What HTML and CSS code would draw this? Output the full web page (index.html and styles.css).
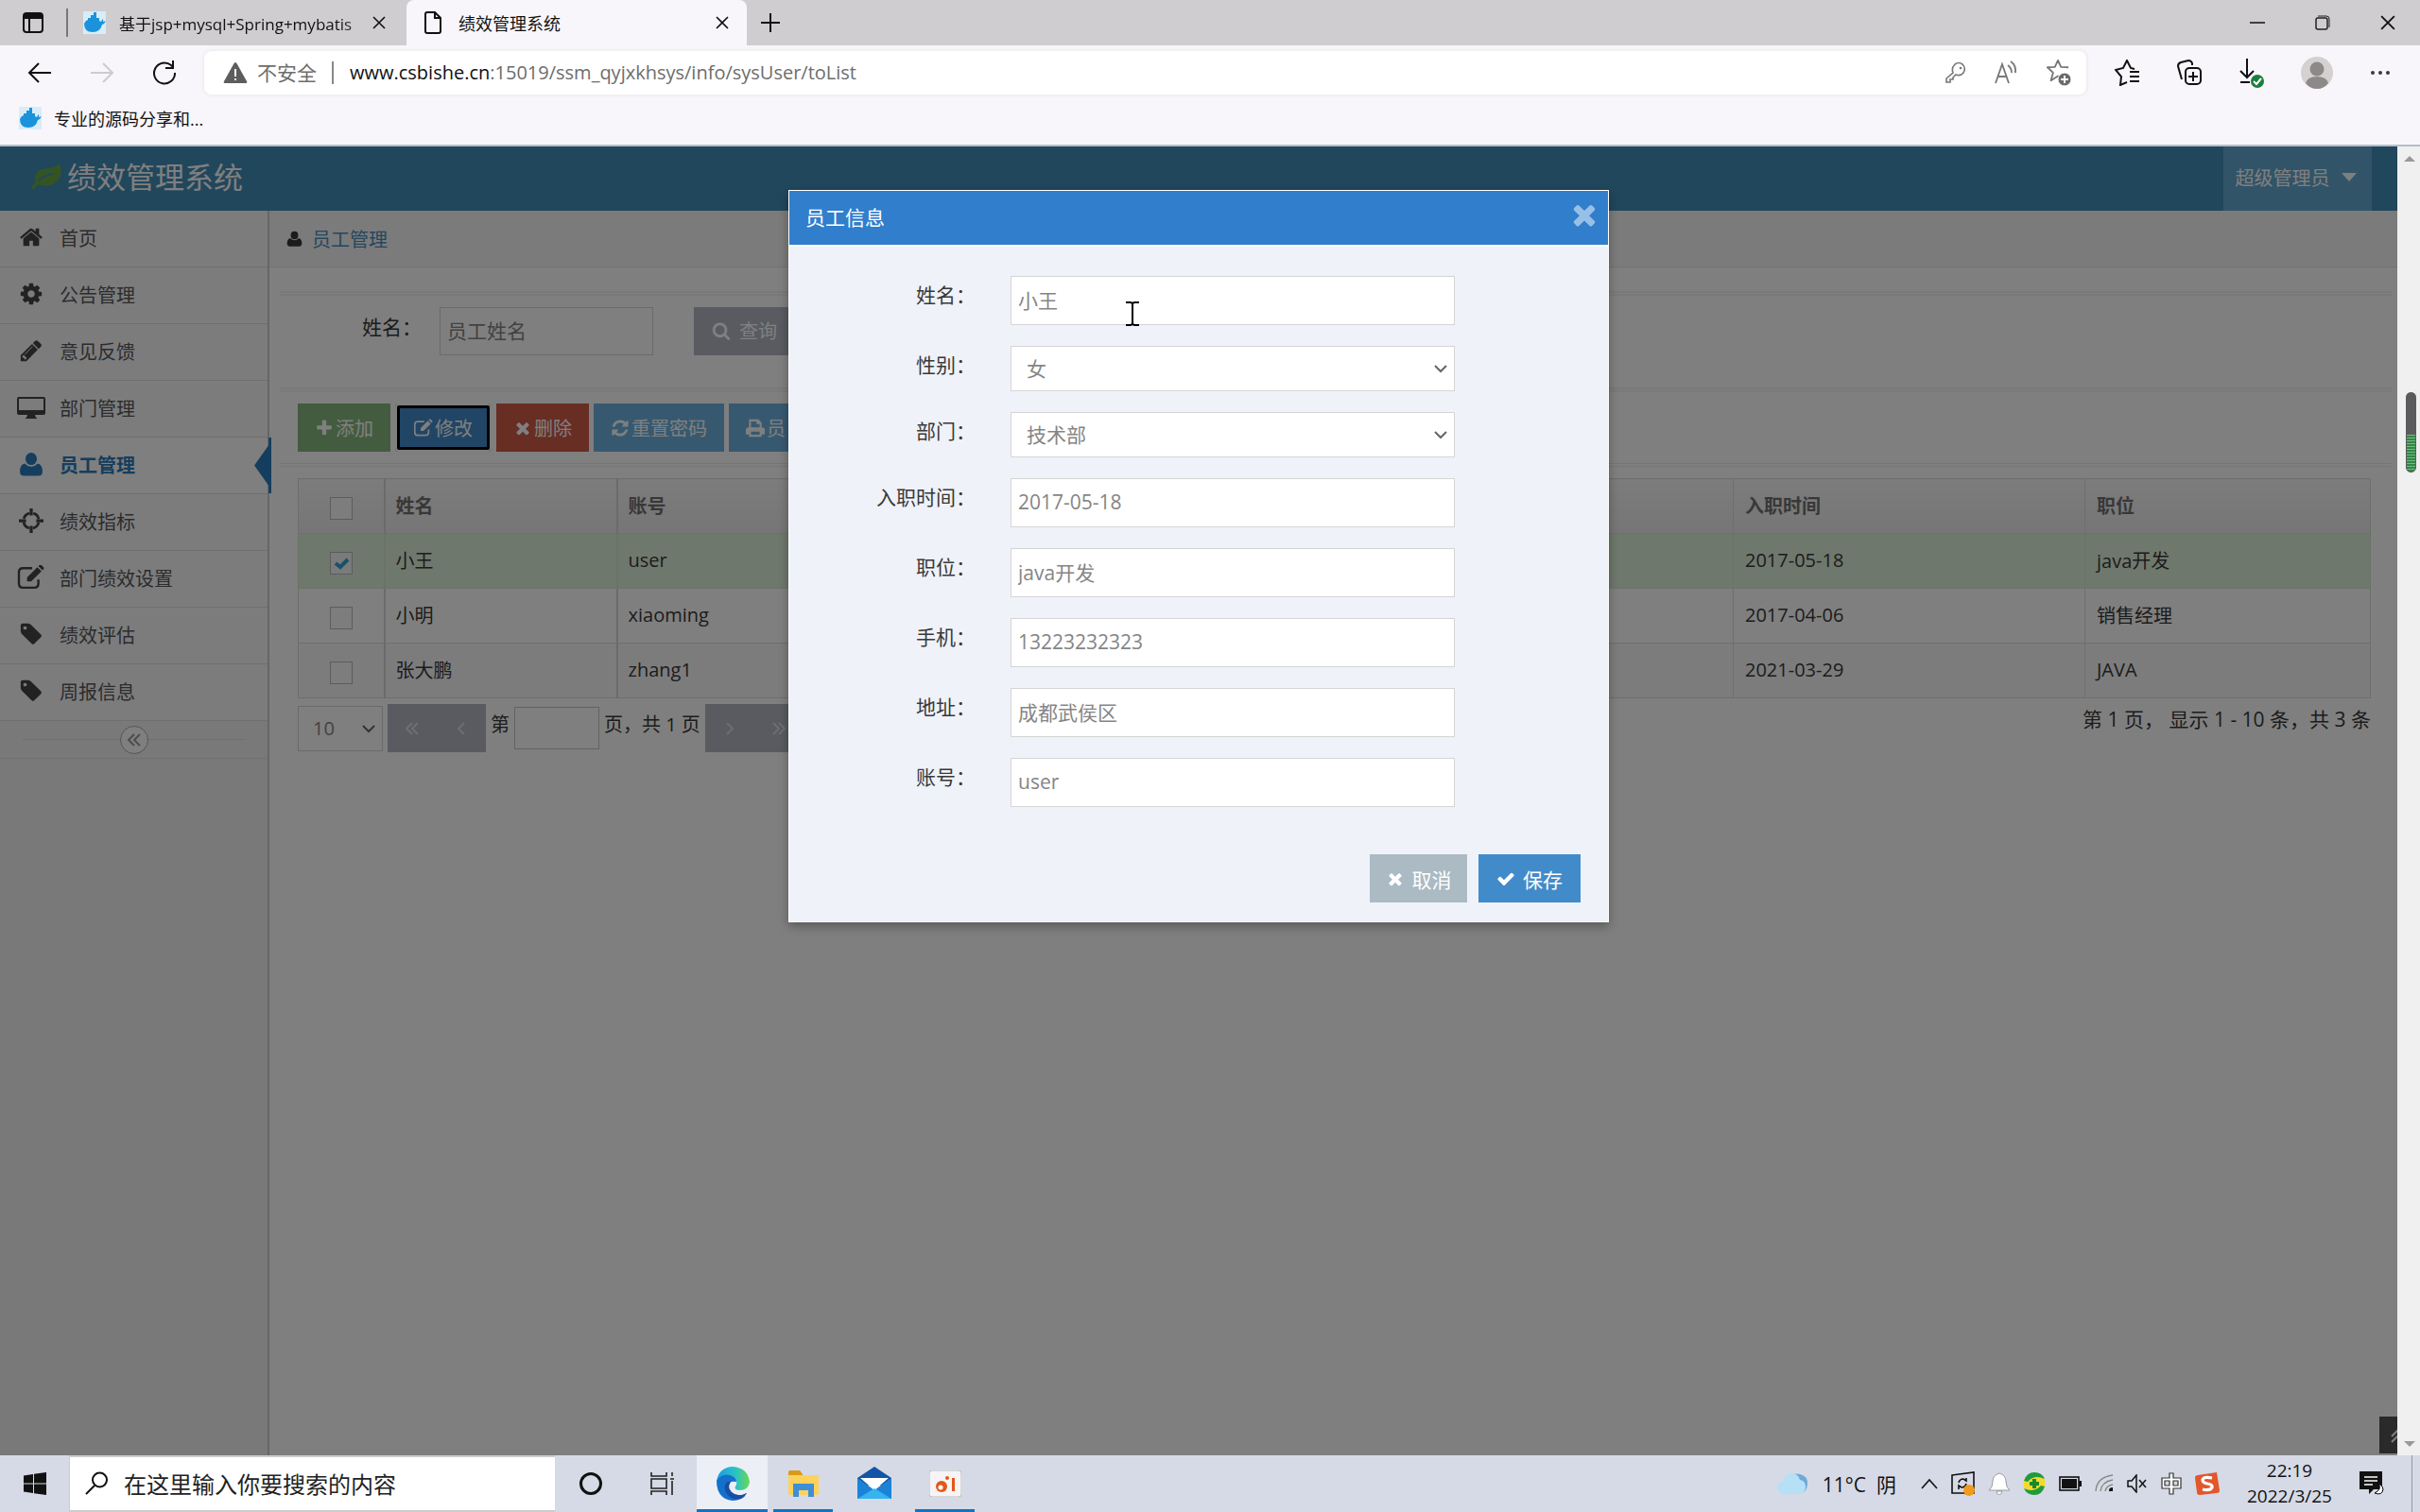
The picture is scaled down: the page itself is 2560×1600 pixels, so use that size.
FILE: index.html
```html
<!DOCTYPE html>
<html lang="zh-CN">
<head>
<meta charset="utf-8">
<title>绩效管理系统</title>
<link rel="stylesheet" href="styles.css">
</head>
<body>
<svg class="defs" aria-hidden="true">
  <symbol id="i-check" viewBox="0 0 1792 1792"><path d="M1671 566q0 40-28 68l-724 724-136 136q-28 28-68 28t-68-28l-136-136-362-362q-28-28-28-68t28-68l136-136q28-28 68-28t68 28l294 295 656-657q28-28 68-28t68 28l136 136q28 28 28 68z"/></symbol>
  <symbol id="i-times" viewBox="0 0 1792 1792"><path d="M1490 1322q0 40-28 68l-136 136q-28 28-68 28t-68-28l-294-294-294 294q-28 28-68 28t-68-28l-136-136q-28-28-28-68t28-68l294-294-294-294q-28-28-28-68t28-68l136-136q28-28 68-28t68 28l294 294 294-294q28-28 68-28t68 28l136 136q28 28 28 68t-28 68l-294 294 294 294q28 28 28 68z"/></symbol>
  <symbol id="i-plus" viewBox="0 0 1792 1792"><path d="M1600 736v192q0 40-28 68t-68 28h-416v416q0 40-28 68t-68 28h-192q-40 0-68-28t-28-68v-416h-416q-40 0-68-28t-28-68v-192q0-40 28-68t68-28h416v-416q0-40 28-68t68-28h192q40 0 68 28t28 68v416h416q40 0 68 28t28 68z"/></symbol>
  <symbol id="i-home" viewBox="0 0 1792 1792"><path d="M1472 992v480q0 26-19 45t-45 19h-384v-384h-256v384h-384q-26 0-45-19t-19-45v-480q0-1 .5-3t.5-3l575-474 575 474q1 2 1 6zm223-69l-62 74q-8 9-21 11h-3q-13 0-21-7l-692-577-692 577q-12 8-24 7-13-2-21-11l-62-74q-8-10-7-23.5t11-21.5l719-599q32-26 76-26t76 26l244 204v-195q0-14 9-23t23-9h192q14 0 23 9t9 23v408l219 182q10 8 11 21.5t-7 23.5z"/></symbol>
  <symbol id="i-cog" viewBox="0 0 1792 1792"><path d="M1152 896q0-106-75-181t-181-75-181 75-75 181 75 181 181 75 181-75 75-181zm512-109v222q0 12-8 23t-20 13l-185 28q-19 54-39 91 35 50 107 138 10 12 10 25t-9 23q-27 37-99 108t-94 71q-12 0-26-9l-138-108q-44 23-91 38-16 136-29 186-7 28-36 28h-222q-14 0-24.5-8.5t-11.5-21.5l-28-184q-49-16-90-37l-141 107q-10 9-25 9-14 0-25-11-126-114-165-168-7-10-7-23 0-12 8-23 15-21 51-66.5t54-70.5q-27-50-41-99l-183-27q-13-2-21-12.5t-8-23.5v-222q0-12 8-23t19-13l186-28q14-46 39-92-40-57-107-138-10-12-10-24 0-10 9-23 26-36 98.5-107.5t94.5-71.5q13 0 26 10l138 107q44-23 91-38 16-136 29-186 7-28 36-28h222q14 0 24.5 8.5t11.5 21.5l28 184q49 16 90 37l142-107q9-9 24-9 13 0 25 10 129 119 165 170 7 8 7 22 0 12-8 23-15 21-51 66.5t-54 70.5q26 50 41 98l183 28q13 2 21 12.5t8 23.5z"/></symbol>
  <symbol id="i-pencil" viewBox="0 0 1792 1792"><path d="M491 1536l91-91-235-235-91 91v107h128v128h107zm523-928q0-22-22-22-10 0-17 7l-542 542q-7 7-7 17 0 22 22 22 10 0 17-7l542-542q7-7 7-17zm-54-192l416 416-832 832h-416v-416zm683 96q0 53-37 90l-166 166-416-416 166-165q36-38 90-38 53 0 91 38l235 234q37 39 37 91z"/></symbol>
  <symbol id="i-tag" viewBox="0 0 1792 1792"><path d="M576 448q0-53-37.5-90.5t-90.5-37.5-90.5 37.5-37.5 90.5 37.5 90.5 90.5 37.5 90.5-37.5 37.5-90.5zm1067 576q0 53-37 90l-491 492q-39 37-91 37-53 0-90-37l-715-716q-38-37-64.5-101t-26.5-117v-416q0-52 38-90t90-38h416q53 0 117 26.5t102 64.5l715 714q37 39 37 91z"/></symbol>
  <symbol id="i-search" viewBox="0 0 1792 1792"><path d="M1216 832q0-185-131.5-316.5t-316.5-131.5-316.5 131.5-131.5 316.5 131.5 316.5 316.5 131.5 316.5-131.5 131.5-316.5zm512 832q0 52-38 90t-90 38q-54 0-90-38l-343-342q-179 124-399 124-143 0-273.5-55.5t-225-150-150-225-55.5-273.5 55.5-273.5 150-225 225-150 273.5-55.5 273.5 55.5 225 150 150 225 55.5 273.5q0 220-124 399l343 343q37 37 37 90z"/></symbol>
  <symbol id="i-refresh" viewBox="0 0 1792 1792"><path d="M1639 1056q0 5-1 7-64 268-268 434.5t-478 166.5q-146 0-282.5-55t-243.5-157l-129 129q-19 19-45 19t-45-19-19-45v-448q0-26 19-45t45-19h448q26 0 45 19t19 45-19 45l-137 137q71 66 161 102t187 36q134 0 250-65t186-179q11-17 53-117 8-23 30-23h192q13 0 22.5 9.5t9.5 22.5zm25-800v448q0 26-19 45t-45 19h-448q-26 0-45-19t-19-45 19-45l138-138q-148-137-349-137-134 0-250 65t-186 179q-11 17-53 117-8 23-30 23h-199q-13 0-22.5-9.5t-9.5-22.5v-7q65-268 270-434.5t480-166.5q146 0 284 55.5t245 156.5l130-129q19-19 45-19t45 19 19 45z"/></symbol>
  <symbol id="i-user" viewBox="0 0 24 24"><ellipse cx="12" cy="7" rx="5.6" ry="6"/><path d="M6 11.500q2.500 3 6 3t6-3q5 .5 5 8 0 4-4 4h-14q-4 0-4-4 0-7.500 5-8z"/></symbol>
  <symbol id="i-desktop" viewBox="0 0 30 24"><path fill-rule="evenodd" d="M2 1h26q2 0 2 2v15q0 2-2 2h-9l1 3h1v1h-12v-1h1l1-3h-9q-2 0-2-2v-15q0-2 2-2zM2 3v12h26v-12z"/></symbol>
  <symbol id="i-cross" viewBox="0 0 24 24"><circle cx="12" cy="12" r="7.500" fill="none" stroke="currentColor" stroke-width="2.600" stroke-dasharray="8 3.780" stroke-dashoffset="-1.900"/><path d="M10.500 0h3v7h-3zM10.500 17h3v7h-3zM0 10.500h7v3h-7zM17 10.500h7v3h-7z"/></symbol>
  <symbol id="i-edit" viewBox="0 0 26 24"><path d="M20 14v4q0 4-4 4h-11q-4 0-4-4v-11q0-4 4-4h9" fill="none" stroke="currentColor" stroke-width="2.200"/><path d="M9 12l10-10 4 4-10 10h-4zM20 1l1-1q1-1 2 0l2 2q1 1 0 2l-1 1z"/></symbol>
  <symbol id="i-print" viewBox="0 0 24 24"><path fill-rule="evenodd" d="M4 1h12l4 4v6q4 0 4 3v6h-4v3h-16v-3h-4v-6q0-3 4-3zM6.500 3.500v7.500h11v-4h-4v-3.500zM6.500 16.500v4h11v-4z"/></symbol>
  <symbol id="i-whale" viewBox="0 0 24 24"><rect width="24" height="24" fill="#d8edf8"/><path fill="#1b93dc" d="M1 13l2-3 2-1V7h3V4h3V1h3v6h3v3l2 1q1-1 1-3 2 1 1 3 1 0 3-1-1 3-4 4-2 8-10 8Q1 22 1 13z"/></symbol>
  <symbol id="i-x" viewBox="0 0 14 14"><path d="M1 1l12 12M13 1L1 13" fill="none" stroke="currentColor" stroke-width="1.600"/></symbol>
  <symbol id="i-dleft" viewBox="0 0 16 16"><path d="M8 2L2 8l6 6M14 2L8 8l6 6" fill="none" stroke="currentColor" stroke-width="2"/></symbol>
  <symbol id="i-left" viewBox="0 0 16 16"><path d="M11 2L5 8l6 6" fill="none" stroke="currentColor" stroke-width="2"/></symbol>
  <symbol id="i-right" viewBox="0 0 16 16"><path d="M5 2l6 6-6 6" fill="none" stroke="currentColor" stroke-width="2"/></symbol>
  <symbol id="i-dright" viewBox="0 0 16 16"><path d="M2 2l6 6-6 6M8 2l6 6-6 6" fill="none" stroke="currentColor" stroke-width="2"/></symbol>
  <symbol id="i-star" viewBox="0 0 28 28"><path d="M19 24l-5-4-8 5 2.500-9L2 10l8.500-.5L14 2l3.500 7.500L26 10" fill="none" stroke="currentColor" stroke-width="2" stroke-linejoin="round"/></symbol>
</svg>

<header class="tabstrip">
  <button class="tabmenu" aria-label="标签操作"><svg width="22" height="22" viewBox="0 0 22 22"><rect x="1" y="1" width="20" height="20" rx="3" fill="none" stroke="#111" stroke-width="2"/><path d="M1 1h20v6h-20zM6 6h2v14h-2z"/></svg></button>
  <div class="tab">
    <svg width="24" height="24"><use href="#i-whale"/></svg>
    <span class="tab-title fade">基于jsp+mysql+Spring+mybatis</span>
    <button aria-label="关闭"><svg width="14" height="14"><use href="#i-x"/></svg></button>
  </div>
  <div class="tab active">
    <svg width="20" height="24" viewBox="0 0 20 24"><path d="M2 3q0-2 2-2h8l6 6v14q0 2-2 2h-12q-2 0-2-2zM12 1v6h6" fill="none" stroke="#111" stroke-width="2"/></svg>
    <span class="tab-title">绩效管理系统</span>
    <button aria-label="关闭"><svg width="14" height="14"><use href="#i-x"/></svg></button>
  </div>
  <button class="newtab" aria-label="新建标签"><svg width="22" height="22" viewBox="0 0 22 22"><path d="M11 1v20M1 11h20" stroke="#111" stroke-width="2"/></svg></button>
  <div class="winbtns">
    <button aria-label="最小化"><svg width="16" height="16" viewBox="0 0 16 16"><path d="M0 8h16" stroke="#111" stroke-width="1.500"/></svg></button>
    <button aria-label="还原"><svg width="16" height="16" viewBox="0 0 16 16"><path d="M3 1h9q3 0 3 3v9" fill="none" stroke="#222"/><rect x="1" y="3" width="12" height="12" rx="2" fill="none" stroke="#222" stroke-width="1.500"/></svg></button>
    <button aria-label="关闭窗口"><svg width="16" height="16"><use href="#i-x"/></svg></button>
  </div>
</header>

<nav class="toolbar">
  <div class="navbtns">
    <button aria-label="后退"><svg width="26" height="24" viewBox="0 0 26 24"><path d="M12 2L2 12l10 10M2 12h23" fill="none" stroke="#111" stroke-width="2"/></svg></button>
    <button aria-label="前进"><svg width="26" height="24" viewBox="0 0 26 24"><path d="M14 2l10 10-10 10M24 12H1" fill="none" stroke="#ccc" stroke-width="2"/></svg></button>
    <button aria-label="刷新"><svg width="26" height="26" viewBox="0 0 26 26"><path d="M24 13A11 11 0 1 1 20 5l2 2M22 0v8h-8" fill="none" stroke="#111" stroke-width="2"/></svg></button>
  </div>
  <div class="address">
    <svg width="26" height="24" viewBox="0 0 26 24"><path d="M13 1q1 0 2 2l10 18q1 2-1 2h-22q-2 0-1-2L11 3q1-2 2-2z" fill="#5d5d5d"/><path d="M12 8h2v8h-2zM12 18h2v2h-2z" fill="#fff"/></svg>
    <span class="insecure">不安全</span>
    <div class="url" role="textbox" aria-label="地址栏"><span>www.csbishe.cn</span>:15019/ssm_qyjxkhsys/info/sysUser/toList</div>
    <div class="addr-icons">
      <svg width="22" height="24" viewBox="0 0 22 24"><path d="M8 12q-2-5 2-9 4-3 8 0 4 4 1 9-3 4-8 2l-3 3v2h-3v3H1v-4z" fill="none" stroke="#777" stroke-width="1.600"/><circle cx="16" cy="7" r="1.300" fill="#777"/></svg>
      <svg width="24" height="26" viewBox="0 0 24 26"><path d="M1 24L8 4l7 20M4 17h8M14 5q4 3 4 8M17 1q6 4 5 12" fill="none" stroke="#777" stroke-width="1.800"/></svg>
      <svg width="28" height="30" viewBox="0 0 28 30"><g color="#777"><use href="#i-star" width="26" height="26"/></g><circle cx="20" cy="22" r="7" fill="#6a6a6a" stroke="#fff"/><path d="M20 18v8M16 22h8" stroke="#fff" stroke-width="2"/></svg>
    </div>
  </div>
  <div class="tools">
    <svg width="26" height="28" viewBox="0 0 26 28"><path d="M13 24l-7 3 1-9-6-7 8-2 4-8 4 8 4 1M16 13h10M16 18h10M16 23h10" fill="none" stroke="#111" stroke-width="2"/></svg>
    <svg width="26" height="28" viewBox="0 0 26 28"><path d="M5 21L1 7q0-3 3-4l8-2q3 0 4 3v2" fill="none" stroke="#111" stroke-width="2"/><rect x="9" y="9" width="16" height="17" rx="4" fill="none" stroke="#111" stroke-width="2"/><path d="M17 13v10M12 18h10" stroke="#111" stroke-width="2"/></svg>
    <svg width="26" height="34" viewBox="0 0 26 34"><path d="M8 2v20M1 15l7 7 7-7M1 27h10" fill="none" stroke="#111" stroke-width="2"/><circle cx="19" cy="26" r="7" fill="#1a7f3c"/><path d="M15 26l3 3 5-6" fill="none" stroke="#fff" stroke-width="2"/></svg>
    <svg width="34" height="34" viewBox="0 0 34 34"><circle cx="17" cy="17" r="17" fill="#d4d1d0"/><circle cx="17" cy="13" r="7.500" fill="#8d8988"/><path d="M5 28q2-7 12-7t12 7q-5 6-12 6t-12-6z" fill="#8d8988"/></svg>
    <svg width="20" height="6" viewBox="0 0 20 6"><circle cx="2" cy="3" r="2"/><circle cx="10" cy="3" r="2"/><circle cx="18" cy="3" r="2"/></svg>
  </div>
</nav>
<div class="bookmarks">
  <svg width="24" height="24"><use href="#i-whale"/></svg><a href="#">专业的源码分享和...</a>
</div>

<div class="viewport">
  <div class="page">
    <header class="appbar">
      <a class="brand" href="#"><svg width="32" height="28" viewBox="0 0 32 28"><path fill="#69aa46" d="M30 1q4 10-2 18-6 7-15 5-4-1-7 0l-3 4q-3 0-2-3l3-4Q2 10 12 7q13-1 18-6z"/><path d="M8 19q6-6 15-7" fill="none" stroke="#438eb9" stroke-width="2"/></svg><span>绩效管理系统</span></a>
      <button class="userbox">超级管理员<i></i></button>
    </header>
    <div class="columns">
      <nav class="sidebar">
        <a href="#"><svg><use href="#i-home"/></svg>首页</a>
        <a href="#"><svg><use href="#i-cog"/></svg>公告管理</a>
        <a href="#"><svg><use href="#i-pencil"/></svg>意见反馈</a>
        <a href="#"><svg><use href="#i-desktop"/></svg>部门管理</a>
        <a href="#" class="current"><svg><use href="#i-user"/></svg>员工管理</a>
        <a href="#"><svg><use href="#i-cross"/></svg>绩效指标</a>
        <a href="#"><svg><use href="#i-edit"/></svg>部门绩效设置</a>
        <a href="#"><svg><use href="#i-tag"/></svg>绩效评估</a>
        <a href="#"><svg><use href="#i-tag"/></svg>周报信息</a>
        <div class="collapse"><button aria-label="收起"><svg width="16" height="16"><use href="#i-dleft"/></svg></button></div>
      </nav>
      <main class="content">
        <div class="crumbs"><svg width="17" height="17"><use href="#i-user"/></svg><a href="#">员工管理</a></div>
        <form class="search">
          <label for="q">姓名：</label>
          <input id="q" placeholder="员工姓名">
          <button type="button"><svg width="20" height="20"><use href="#i-search"/></svg>查询</button>
        </form>
        <div class="actions">
          <button class="green"><svg><use href="#i-plus"/></svg>添加</button>
          <button class="blue focus"><svg><use href="#i-edit"/></svg>修改</button>
          <button class="red"><svg><use href="#i-times"/></svg>删除</button>
          <button class="sky"><svg><use href="#i-refresh"/></svg>重置密码</button>
          <button class="sky"><svg><use href="#i-print"/></svg>员</button>
        </div>
        <div class="grid">
          <table>
            <colgroup><col class="c-check"><col class="c-name"><col><col class="c-date"><col class="c-post"></colgroup>
            <thead><tr><th class="ck"><input type="checkbox" aria-label="全选"></th><th>姓名</th><th>账号</th><th>入职时间</th><th>职位</th></tr></thead>
            <tbody>
              <tr class="picked"><td class="ck"><input type="checkbox" checked aria-label="小王"></td><td>小王</td><td>user</td><td>2017-05-18</td><td>java开发</td></tr>
              <tr><td class="ck"><input type="checkbox" aria-label="小明"></td><td>小明</td><td>xiaoming</td><td>2017-04-06</td><td>销售经理</td></tr>
              <tr class="odd"><td class="ck"><input type="checkbox" aria-label="张大鹏"></td><td>张大鹏</td><td>zhang1</td><td>2021-03-29</td><td>JAVA</td></tr>
            </tbody>
          </table>
          <div class="pager">
            <select aria-label="每页条数"><option>10</option></select>
            <span class="pg"><button aria-label="首页"><svg><use href="#i-dleft"/></svg></button><button aria-label="上一页"><svg><use href="#i-left"/></svg></button></span>
            <label for="pageno">第</label><input id="pageno"><span>页，共 1 页</span>
            <span class="pg"><button aria-label="下一页"><svg><use href="#i-right"/></svg></button><button aria-label="末页"><svg><use href="#i-dright"/></svg></button></span>
            <span class="total">第 1 页， 显示 1 - 10 条，共 3 条</span>
          </div>
        </div>
      </main>
    </div>
    <button class="totop" aria-label="回到顶部"><svg width="16" height="16" viewBox="0 0 16 16"><path d="M2 9l6-6 6 6M2 15l6-6 6 6" fill="none" stroke="#fff" stroke-width="2"/></svg></button>
    <div class="backdrop">
      <form class="dialog" role="dialog" aria-labelledby="dlg">
        <div class="dialog-head"><h2 id="dlg">员工信息</h2><button type="button" aria-label="关闭"><svg width="34" height="34"><use href="#i-times"/></svg></button></div>
        <div class="fields">
          <div><label for="f1">姓名：</label><input id="f1" value="小王"></div>
          <div><label for="f2">性别：</label><select id="f2"><option>女</option></select></div>
          <div><label for="f3">部门：</label><select id="f3"><option>技术部</option></select></div>
          <div><label for="f4">入职时间：</label><input id="f4" value="2017-05-18"></div>
          <div><label for="f5">职位：</label><input id="f5" value="java开发"></div>
          <div><label for="f6">手机：</label><input id="f6" value="13223232323"></div>
          <div><label for="f7">地址：</label><input id="f7" value="成都武侯区"></div>
          <div><label for="f8">账号：</label><input id="f8" value="user"></div>
        </div>
        <div class="dialog-foot">
          <button type="button" class="cancel"><svg width="20" height="20"><use href="#i-times"/></svg>取消</button>
          <button type="button" class="save"><svg width="20" height="20"><use href="#i-check"/></svg>保存</button>
        </div>
      </form>
    </div>
    <svg class="ibeam" width="14" height="26" viewBox="0 0 14 26"><path d="M0 1h5l2 1 2-1h5M0 25h5l2-1 2 1h5M7 2v22" fill="none" stroke="#000" stroke-width="2"/></svg>
  </div>
  <div class="scroll"><i class="up"></i><span class="meter"></span><i class="down"></i></div>
</div>

<footer class="taskbar">
  <button class="start" aria-label="开始"><svg width="24" height="24" viewBox="0 0 24 24"><path d="M0 3.500L10 2v9.500H0zM11 1.800L24 0v11.500H11zM0 12.500h10V22L0 20.500zM11 12.500h13V24l-13-1.800z"/></svg></button>
  <div class="tsearch">
    <svg width="26" height="26" viewBox="0 0 26 26"><circle cx="15.500" cy="9" r="7.500" fill="none" stroke="#111" stroke-width="2"/><path d="M10 15L1 24" stroke="#111" stroke-width="2"/></svg>
    <input aria-label="搜索" placeholder="在这里输入你要搜索的内容">
  </div>
  <div class="apps">
    <button aria-label="Cortana"><svg width="26" height="26" viewBox="0 0 26 26"><circle cx="13" cy="13" r="10.500" fill="none" stroke="#111" stroke-width="3"/></svg></button>
    <button aria-label="任务视图"><svg width="26" height="24" viewBox="0 0 26 24"><path d="M2 0v4h16V0M2 24v-4h16v4M2 7h16v10H2zM24 0v4M24 9v15M22 7h4" fill="none" stroke="#222" stroke-width="1.600"/></svg></button>
    <button aria-label="Edge" class="on lit"><svg width="36" height="36" viewBox="0 0 36 36"><defs><linearGradient id="eg" x1="0" x2="1"><stop offset="0" stop-color="#1c9ce4"/><stop offset=".6" stop-color="#2cc4c4"/><stop offset="1" stop-color="#6bd84e"/></linearGradient></defs><path fill="url(#eg)" d="M1 16Q3 1 18 0q16 1 18 16-1 9-11 9-6-1-4-4 3-5-1-9Q12 7 1 16z"/><path fill="#1371cc" d="M1 15q5-8 14-6 7 2 7 7-10-2-8 8 3 9 14 6l5-2q-5 8-15 8Q1 34 1 15z"/><path fill="#164fa5" d="M12 16q-5 6 0 13t15 5q4-2 6-6-9 5-16-1-5-5-1-11z"/></svg></button>
    <button aria-label="文件资源管理器" class="on"><svg width="34" height="30" viewBox="0 0 34 30"><path fill="#d99a1c" d="M1 3q0-2 2-2h10l3 4v4H1z"/><path fill="#fcd25c" d="M1 6h32v19q0 2-2 2H3q-2 0-2-2z"/><path fill="#3f8fd6" d="M6 15h22v14h-6v-7H12v7H6z"/></svg></button>
    <button aria-label="邮件"><svg width="36" height="36" viewBox="0 0 36 36"><path fill="#1255a8" d="M0 12L18 0l18 12v8H0z"/><path fill="#fff" d="M3 12h30L18 25z"/><path fill="#1a83d8" d="M0 12l18 13 18-13v22H0z"/><path fill="#35b4ee" d="M0 34l18-11 18 11z"/></svg></button>
    <button aria-label="录屏" class="on"><svg width="34" height="28" viewBox="0 0 34 28"><rect width="34" height="28" rx="3" fill="#f6f4f4" stroke="#bbb"/><circle cx="13" cy="17" r="6" fill="#e2571c"/><circle cx="12" cy="18" r="2.500" fill="#fff"/><circle cx="19" cy="8" r="2" fill="#e2571c"/><path d="M24 8h3v14h-3z" fill="#e2571c"/></svg></button>
  </div>
  <div class="tray">
    <svg width="34" height="24" viewBox="0 0 34 24"><path fill="#6fa9d8" d="M13 6q4-6 11-4 9 2 8 11-1 9-8 9z"/><path fill="#b5e0f6" d="M7 23q-7-1-7-7 0-5 6-6 1-8 9-9 7 0 9 7 6 1 6 7 0 7-6 8z"/></svg>
    <span class="weather">11°C&nbsp; 阴</span>
    <svg width="18" height="12" viewBox="0 0 18 12"><path d="M1 11l8-9 8 9" fill="none" stroke="#111" stroke-width="1.600"/></svg>
    <svg width="26" height="26" viewBox="0 0 26 26"><path d="M1 4l23-3v22H1z" fill="none" stroke="#111" stroke-width="1.600"/><path d="M8 12q1-4 5-4l3 2v-3M16 13q-1 4-5 4l-3-2v4" fill="none" stroke="#111" stroke-width="1.600"/><circle cx="19" cy="20" r="6" fill="#f39a1d"/></svg>
    <svg width="22" height="24" viewBox="0 0 22 24"><path d="M11 1q7 2 7 9 0 6 4 9H0q4-3 4-9 0-7 7-9zM8 20h6q-1 4-3 4t-3-4z" fill="#fff" stroke="#888" stroke-width=".8"/></svg>
    <svg width="24" height="24" viewBox="0 0 24 24"><circle cx="12" cy="12" r="11.500" fill="#f6d92a"/><path d="M1 9Q4 0 12 0q8 0 11 7-11-5-18 3zM23 15q-3 9-11 9-8 0-11-7 11 5 18-3z" fill="#1d9b41"/><path d="M10 7h4v3h3v4h-3v3h-4v-3H7v-4h3z" fill="#15892f"/></svg>
    <svg width="24" height="16" viewBox="0 0 24 16"><rect x="1" y="1" width="20" height="14" fill="none" stroke="#111" stroke-width="1.600"/><path d="M3 3h16v10H3zM21 5h3v6h-3z"/></svg>
    <svg width="20" height="20" viewBox="0 0 20 20"><path d="M1 18Q2 3 19 1M6 18Q7 8 19 6M11 18q1-6 8-7" fill="none" stroke="#888" stroke-width="1.400"/><path d="M15 17q0-3 4-3v4h-4z"/></svg>
    <svg width="22" height="20" viewBox="0 0 22 20"><path d="M1 7h4l5-6v18l-5-6H1zM13 6l7 8M20 6l-7 8" fill="none" stroke="#111" stroke-width="1.500"/></svg>
    <svg width="22" height="24" viewBox="0 0 22 24"><path fill="#fff" stroke="#333" stroke-width="1.200" fill-rule="evenodd" d="M9 1h4v5h8v11h-8v6H9v-6H1V6h8zM4 9v5h5V9zM13 9v5h5V9z"/></svg>
    <svg width="26" height="24" viewBox="0 0 26 24"><path fill="#e2572b" d="M3 3l20-3 3 19q0 3-3 3L5 24q-3 0-3-3L0 6q0-3 3-3z"/><path d="M18 6q-9-2-10 2 0 3 5 4 6 1 5 4-2 4-10 2" fill="none" stroke="#fff" stroke-width="3.200"/></svg>
    <div class="clock"><time>22:19</time><time>2022/3/25</time></div>
    <svg width="26" height="26" viewBox="0 0 26 26"><path d="M0 0h24v19h-9l-5 5v-5H0z"/><path d="M5 6h14M5 10h14M5 14h9" stroke="#fff" stroke-width="1.500"/><path d="M20 13q4 6-4 10 8 3 9-4 0-4-5-6z" fill="#fff" stroke="#000"/></svg>
    <i class="peek"></i>
  </div>
</footer>
</body>
</html>
```
FILE: styles.css
```css
* { box-sizing: border-box; }
body {
  margin: 0;
  height: 100vh;
  display: flex;
  flex-direction: column;
  overflow: hidden;
  font-family: "Open Sans", "Noto Sans CJK SC", sans-serif;
  font-size: 20px;
  color: #393939;
}
button, input, select { font: inherit; color: inherit; margin: 0; padding: 0; border: 0; border-radius: 0; }
button { background: none; display: inline-flex; align-items: center; justify-content: center; }
a { color: inherit; text-decoration: none; }
svg { fill: currentColor; flex: none; }
.defs { position: absolute; width: 0; height: 0; }

/* browser chrome */
.tabstrip {
  flex: none;
  display: flex;
  align-items: center;
  height: 48px;
  background: #cfcdcf;
  color: #111;
  font-size: 18px;
}
.tabmenu { width: 72px; height: 30px; border-right: 2px solid #777; }
.tab { display: flex; align-items: center; width: 358px; height: 48px; padding: 0 14px 0 16px; gap: 14px; }
.tab button { width: 20px; height: 20px; }
.tab:first-of-type { gap: 4px; font-size: 17px; }
.tab:first-of-type svg:first-child { margin-right: 10px; }
.tab.active { width: 360px; gap: 17px; padding: 0 16px 0 18px; background: #f8f6fa; border-radius: 8px 8px 0 0; }
.tab-title { flex: 1; white-space: nowrap; }
.fade { -webkit-mask-image: linear-gradient(90deg, #000 88%, #0006); mask-image: linear-gradient(90deg, #000 88%, #0006); }
.newtab { width: 50px; height: 48px; }
.winbtns { margin-left: auto; display: flex; }
.winbtns button { width: 69px; height: 48px; }
.toolbar {
  flex: none;
  display: flex;
  align-items: center;
  height: 57px;
  background: #f8f6fa;
}
.navbtns { width: 216px; display: flex; gap: 40px; padding-left: 29px; }
.address {
  flex: 1;
  display: flex;
  align-items: center;
  height: 46px;
  padding: 0 15px 0 20px;
  border-radius: 8px;
  background: #fff;
  box-shadow: 0 0 4px #e4e2e6;
  color: #6d6d6d;
}
.insecure { margin-left: 10px; padding-right: 16px; border-right: 2px solid #888; line-height: 24px; font-size: 21px; }
.url { margin-left: 17px; color: #6d6d6d; }
.url span { color: #111; }
.addr-icons { margin-left: auto; display: flex; align-items: center; gap: 30px; }
.tools { width: 353px; display: flex; align-items: center; justify-content: space-between; padding: 0 32px 0 30px; }
.bookmarks {
  flex: none;
  display: flex;
  align-items: center;
  gap: 13px;
  height: 50px;
  padding: 0 20px 8px;
  border-bottom: 2px solid #b4bfc9;
  background: #f8f6fa;
  color: #111;
  font-size: 18px;
}

/* application page */
.viewport { flex: 1; display: flex; min-height: 0; }
.page { position: relative; flex: 1; min-width: 0; display: flex; flex-direction: column; background: #fff; overflow: hidden; }
.appbar {
  flex: none;
  display: flex;
  justify-content: space-between;
  height: 68px;
  padding: 0 27px 0 33px;
  background: #438eb9;
  color: #fff;
}
.brand { display: flex; align-items: center; gap: 6px; padding-bottom: 7px; font-size: 31px; }
.userbox { width: 157px; padding: 0 4px 3px 0; background: #62a8d1; gap: 12px; }
.userbox i { border: 8px solid transparent; border-top: 9px solid #fff; border-bottom: 0; }
.columns { flex: 1; display: flex; min-height: 0; }
.sidebar { width: 285px; flex: none; background: #f2f2f2; border-right: 2px solid #ccc; }
.sidebar > a {
  position: relative;
  display: flex;
  align-items: center;
  height: 60px;
  padding: 0 0 3px 18px;
  gap: 15px;
  border-bottom: 1px solid #dedee0;
  background: #f8f8fa;
  color: #585858;
}
.sidebar > a svg { width: 30px; height: 26px; color: #444; }
.sidebar > a.current { background: #fff; color: #2b7dbc; font-weight: bold; }
.sidebar > a.current svg { color: #2b7dbc; }
.current::after {
  content: "";
  position: absolute;
  right: -4px;
  top: 0;
  width: 18px;
  height: 59px;
  background: #2b7dbc;
  clip-path: polygon(100% 0, 100% 100%, 84% 100%, 84% 86%, 0 50%, 84% 14%, 84% 0);
}
.collapse { display: flex; align-items: center; padding: 0 24px; height: 40px; background: #f3f3f3; border-bottom: 1px solid #e0e0e0; }
.collapse::before, .collapse::after { content: ""; flex: 1; height: 1px; background: #ddd; }
.collapse button { width: 30px; height: 30px; border: 1px solid #aaa; border-radius: 50%; background: #fff; color: #999; }
.content { flex: 1; min-width: 0; }
.crumbs {
  display: flex;
  align-items: center;
  gap: 10px;
  height: 60px;
  padding: 0 18px;
  border-bottom: 1px solid #e5e5e5;
  background: #f6f6f8;
}
.crumbs a { color: #4c8fbd; }
.search {
  display: flex;
  align-items: flex-start;
  height: 107px;
  margin: 25px 6px 0 11px;
  padding: 12px 0 0 87px;
  border-top: 5px double #f3f3f3;
  border-bottom: 5px double #f3f3f3;
  font-size: 21px;
}
.search label { width: 82px; line-height: 42px; }
.search input { width: 226px; height: 51px; padding: 0 7px 2px; border: 1px solid #d5d5d5; background: #fff; }
.search input::placeholder { color: #858585; }
.search button { width: 120px; height: 51px; margin-left: 43px; gap: 9px; padding: 0 13px 2px 0; background: #b2b7c2; color: #fff; font-size: 20px; }
.actions {
  display: flex;
  gap: 5px;
  margin: 0 6px 0 11px;
  padding: 12px 0 12px 19px;
  border-bottom: 4px double #ececec;
}
.actions button { height: 51px; padding: 0 18px; gap: 2px; color: #fff; }
.actions svg { width: 20px; height: 20px; }
.actions .green { background: #87b87f; }
.actions .blue { background: #428bca; }
.actions .red { background: #d15b47; }
.actions .sky { background: #6fb3e0; }
.actions .focus { padding: 0 20px; border-radius: 4px; outline: 3px solid #000; outline-offset: -5px; box-shadow: inset 0 0 0 3px #fff; }
.grid { margin: 12px 28px 0 30px; }
table { width: 100%; table-layout: fixed; border-collapse: collapse; border: 1px solid #ccc; }
.c-check { width: 91px; }
.c-name { width: 246px; }
.c-date { width: 372px; }
.c-post { width: 302px; }
th, td { height: 58px; padding: 0 12px 3px; text-align: left; border: 1px solid #ddd; }
th { background: linear-gradient(#f8f8f8, #ececec); color: #707070; font-weight: 700; }
td:nth-child(2), td:nth-child(3), th:nth-child(2), th:nth-child(3) { border-left: 2px solid #d6d6d6; padding-left: 11px; }
.picked td { background: #dff0d8; border-color: #d6e8ce; }
.odd td { background: #f9f9fb; }
.ck { padding: 5px 0 0; text-align: center; }
input[type="checkbox"] { appearance: none; display: block; width: 24px; height: 24px; margin: 0 auto; border: 1px solid #b8b8b8; background: #fafafa; }
input[type="checkbox"]:checked { background: #f2f7fb url("data:image/svg+xml,%3Csvg xmlns='http://www.w3.org/2000/svg' viewBox='0 0 22 22'%3E%3Cpath d='M5 11l5 4 8-8' fill='none' stroke='%2332a3ce' stroke-width='4'/%3E%3C/svg%3E"); }
select {
  appearance: none;
  border: 1px solid #d5d5d5;
  background: #fff url("data:image/svg+xml,%3Csvg xmlns='http://www.w3.org/2000/svg' width='16' height='10'%3E%3Cpath d='M2 2l6 6 6-6' fill='none' stroke='%23666' stroke-width='2'/%3E%3C/svg%3E") no-repeat right 6px center;
  color: #858585;
}
.pager { display: flex; align-items: flex-start; gap: 5px; padding-top: 6px; line-height: 44px; }
.pager select { width: 90px; height: 48px; margin-top: 2px; padding-left: 15px; }
.pager input { width: 90px; height: 45px; margin-top: 3px; border: 1px solid #c5c5c5; background: #fff; }
.pg { display: flex; height: 51px; background: #b2b7c2; color: #d8dce2; }
.pg button { width: 52px; }
.pg svg { width: 16px; height: 16px; }
.total { margin-left: auto; font-size: 21px; line-height: 32px; }
.totop { position: absolute; right: -18px; bottom: 2px; width: 37px; height: 39px; background: #555; }

/* dialog over the page */
.backdrop { position: absolute; inset: 0; display: flex; justify-content: center; align-items: flex-start; padding-top: 46px; background: rgba(0, 0, 0, 0.5); }
.dialog { width: 868px; background: #eff2f9; border: 1px solid #fff; box-shadow: 0 4px 10px rgba(0, 0, 0, 0.3); font-size: 21px; }
.dialog-head { display: flex; align-items: center; justify-content: space-between; height: 59px; padding: 0 8px 4px 17px; background: #307ecc; border-bottom: 2px solid #fff; color: #fff; }
.dialog-head h2 { margin: 0; font-size: 21px; font-weight: normal; }
.dialog-head button { height: 34px; margin-bottom: 4px; color: #98bfe6; }
.fields { display: flex; flex-direction: column; gap: 22px; padding: 31px 162px 0 0; }
.fields > div { display: flex; justify-content: flex-end; }
.fields label { margin-right: 37px; line-height: 41px; }
.fields input, .fields select { width: 470px; color: #858585; }
.fields input { height: 52px; padding: 0 6px 3px 7px; border: 1px solid #d5d5d5; background: #fff; }
.fields select { height: 48px; padding-left: 16px; }
.dialog-foot { display: flex; justify-content: flex-end; gap: 12px; padding: 50px 29px 20px; }
.dialog-foot button { width: 103px; height: 51px; gap: 8px; color: #fff; }
.dialog-foot .cancel { background: #abbac3; }
.dialog-foot .save { width: 108px; background: #428bca; }
.ibeam { position: absolute; left: 1191px; top: 164px; }

.scroll { position: relative; width: 24px; flex: none; background: #f0f0f0; }
.scroll i { position: absolute; left: 7px; border: 6px solid transparent; }
.scroll .up { top: 10px; border-top: 0; border-bottom-color: #999; }
.scroll .down { bottom: 9px; border-bottom: 0; border-top-color: #999; }
.meter { position: absolute; left: 9px; top: 260px; width: 11px; height: 85px; border-radius: 5px; border: 1px solid #5b5b5d; background: linear-gradient(#5b5b5d 44px, transparent 44px), repeating-linear-gradient(#37834b 0 2px, #6cbf7e 2px 3px); }

/* system taskbar */
.taskbar { flex: none; display: flex; height: 60px; background: #d6dae6; color: #111; }
.start { width: 73px; }
.tsearch { display: flex; align-items: center; gap: 15px; width: 514px; padding-left: 16px; border: 2px solid #ccc; border-width: 2px 0 2px 1px; background: #fff; }
.tsearch input { flex: 1; min-width: 0; background: none; font-size: 24px; }
.tsearch input::placeholder { color: #222; }
.apps { display: flex; }
.apps button { position: relative; width: 75px; }
.apps .lit { background: #eceff6; }
.apps .on::after { content: ""; position: absolute; left: 6px; right: 6px; bottom: 0; height: 3px; background: #1273c0; }
.apps .lit::after { left: 0; right: 0; }
.tray { margin-left: auto; display: flex; align-items: center; gap: 14px; }
.weather { font-size: 21px; margin-right: 12px; }
.clock { display: flex; flex-direction: column; align-items: center; width: 120px; font-size: 19px; line-height: 27px; }
.peek { width: 1px; height: 60px; margin: 0 8px 0 15px; background: #999; }
```
